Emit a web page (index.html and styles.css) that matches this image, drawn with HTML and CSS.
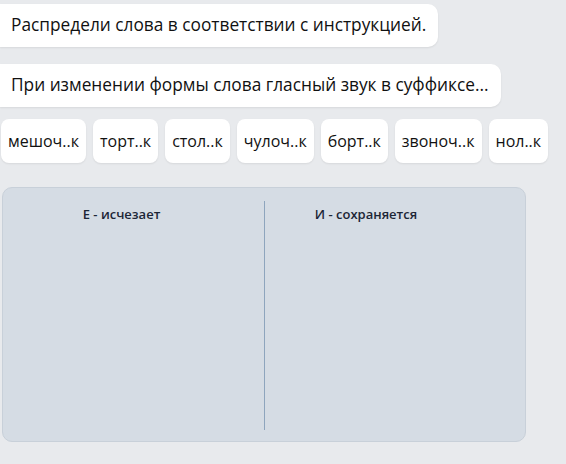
FILE: index.html
```html
<!DOCTYPE html>
<html lang="ru">
<head>
<meta charset="utf-8">
<title>Распредели слова</title>
<link rel="stylesheet" href="styles.css">
</head>
<body>
<div class="chat">
  <div class="bubble">Распредели слова в соответствии с инструкцией.</div>
  <div class="bubble">При изменении формы слова гласный звук в суффиксе...</div>
  <div class="chips">
    <span class="chip">мешоч..к</span>
    <span class="chip">торт..к</span>
    <span class="chip">стол..к</span>
    <span class="chip">чулоч..к</span>
    <span class="chip">борт..к</span>
    <span class="chip">звоноч..к</span>
    <span class="chip">нол..к</span>
  </div>
  <div class="board">
    <div class="column">
      <div class="column-title title-left">Е - исчезает</div>
    </div>
    <div class="column">
      <div class="column-title title-right">И - сохраняется</div>
    </div>
  </div>
</div>
</body>
</html>
```

FILE: styles.css
```css
body, html {
  margin: 0;
  padding: 0;
  height: 100%;
  background: #e8eaed;
  color: #111;
  font-family: "Open Sans", "Noto Sans", sans-serif;
}
.chat {
  display: flex;
  flex-direction: column;
  align-items: flex-start;
  padding: 4px 0 0 0;
}
.bubble {
  background: #fff;
  border-radius: 0 10px 10px 0;
  padding: 10px 12px 11px 11px;
  font-size: 17.3px;
  line-height: 22px;
  margin-bottom: 17px;
  box-shadow: 0 1px 2px rgba(0,0,0,0.08);
}
.chips {
  display: flex;
  gap: 7px;
  margin-top: -5px;
  padding-left: 1px;
}
.chip {
  background: #fff;
  border-radius: 8px;
  padding: 11px 7px;
  font-size: 16px;
  line-height: 22px;
  font-weight: 500;
  box-shadow: 0 1px 2px rgba(0,0,0,0.08);
}
.board {
  margin: 24px 0 0 2px;
  width: 524px;
  height: 255px;
  background: #d5dce4;
  border: 1px solid #c8d0d9;
  border-radius: 10px;
  display: grid;
  grid-template-columns: 1fr 1fr;
  padding: 13px 0 11px;
  box-sizing: border-box;
}
.column {
  text-align: center;
}
.column + .column {
  border-left: 1px solid #8ea5bd;
}
.column-title {
  font-size: 13px;
  font-weight: 600;
  color: #1c2636;
  line-height: 18px;
  padding-top: 4px;
}
.title-left {
  padding-right: 24px;
}
.title-right {
  padding-right: 58px;
}
```
